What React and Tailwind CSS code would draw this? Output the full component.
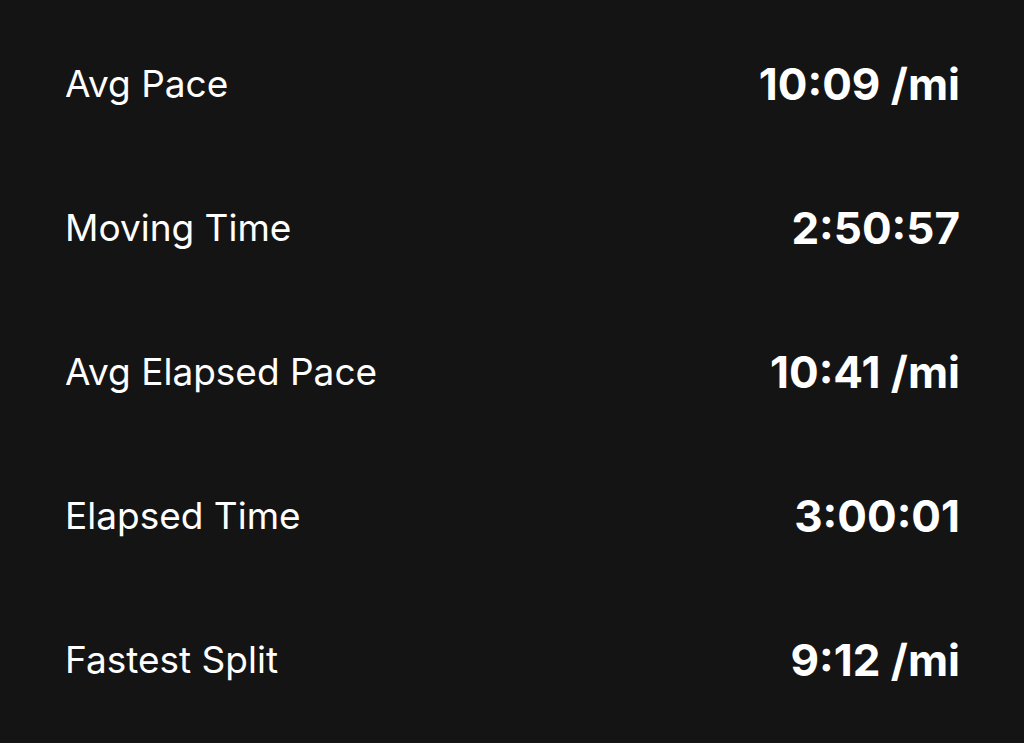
import React from "react";

const stats = [
  { label: "Avg Pace", value: "10:09 /mi" },
  { label: "Moving Time", value: "2:50:57" },
  { label: "Avg Elapsed Pace", value: "10:41 /mi" },
  { label: "Elapsed Time", value: "3:00:01" },
  { label: "Fastest Split", value: "9:12 /mi" },
];

const App = () => {
  return (
    <div className="min-h-[743px] w-full bg-[#141414] py-3 pl-[65px] pr-[64px] font-['Inter',sans-serif] text-white">
      {stats.map((s) => (
        <div key={s.label} className="flex h-[144px] items-center justify-between">
          <p className="text-[37px] font-normal">{s.label}</p>
          <p className="text-[44px] font-bold">{s.value}</p>
        </div>
      ))}
    </div>
  );
};

export default App;
